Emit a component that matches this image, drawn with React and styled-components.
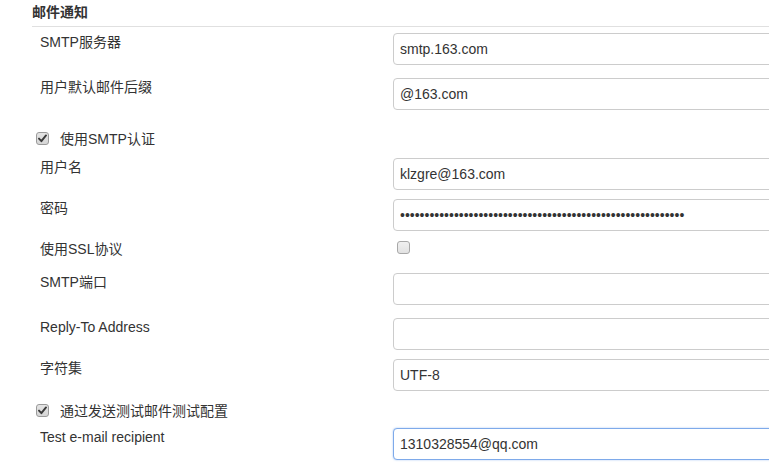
import React from 'react';
import styled, { createGlobalStyle } from 'styled-components';

const Global = createGlobalStyle`
  html, body { margin: 0; padding: 0; background: #fff; overflow: hidden; }
  body {
    font-family: "Liberation Sans", Arial, "Noto Sans CJK SC", sans-serif;
    font-size: 14px;
    color: #333;
  }
`;

const Page = styled.div`
  width: 769px;
  height: 473px;
  overflow: hidden;
  padding-left: 32px;
  box-sizing: border-box;
  display: flex;
  flex-direction: column;
`;

const SectionTitle = styled.h3`
  margin: 0;
  padding-top: 2px;
  font-size: 14px;
  line-height: 20px;
  font-weight: bold;
  color: #333;
`;

const Divider = styled.div`
  margin-top: 4px;
  height: 1px;
  background: #e0e0e0;
`;

const Row = styled.div`
  display: grid;
  grid-template-columns: 353px 420px;
  align-items: ${p => (p.$center ? 'center' : 'start')};
  min-height: ${p => (p.$center ? '20px' : 'auto')};
  margin-top: ${p => p.$gap}px;
  padding-left: 8px;
`;

const Label = styled.div`
  font-size: 14px;
  line-height: ${p => (p.$center ? 20 : 18)}px;
  color: #333;
  white-space: nowrap;
`;

const TextInput = styled.input`
  box-sizing: border-box;
  width: 100%;
  height: 32px;
  margin: 0;
  padding: 0 6px;
  font-family: "Liberation Sans", Arial, sans-serif;
  font-size: 14px;
  color: #333;
  background: #fff;
  border: 1px solid ${p => (p.$focused ? '#7eaaea' : '#cccccc')};
  border-radius: 4px;
  box-shadow: ${p => (p.$focused ? '0 0 2px rgba(102,155,233,0.6)' : 'none')};
  outline: none;
`;

const CheckRow = styled.div`
  display: flex;
  align-items: center;
  height: 20px;
  gap: 11px;
  padding-left: 4px;
  margin-top: ${p => p.$gap}px;
`;

const CheckText = styled.span`
  font-size: 14px;
  line-height: 20px;
  padding-top: 2px;
  color: #333;
`;

const Box = styled.span`
  box-sizing: border-box;
  display: inline-flex;
  align-items: center;
  justify-content: center;
  width: 13px;
  height: 13px;
  border: 1px solid ${p => (p.$checked ? '#9a9a9a' : '#a8a8a8')};
  border-radius: 3px;
  background: ${p => (p.$checked ? 'linear-gradient(#e4e4e4, #d6d6d6)' : 'linear-gradient(#f0f0f0, #e2e2e2)')};
  margin-left: ${p => p.$offset || 0}px;
`;

function Checkbox({ checked, offset }) {
  return (
    <Box $checked={checked} $offset={offset}>
      {checked && (
        <svg width="9" height="9" viewBox="0 0 9 9">
          <path d="M1 4.6 L3.4 7.2 L8 1.4" fill="none" stroke="#3a3a3a" strokeWidth="1.9" strokeLinecap="round" strokeLinejoin="round" />
        </svg>
      )}
    </Box>
  );
}

const FieldRow = ({ label, value, gap, type = 'text', focused }) => (
  <Row $gap={gap}>
    <Label>{label}</Label>
    <TextInput type={type} defaultValue={value} $focused={focused} readOnly />
  </Row>
);

export default function App() {
  const pwd = '•'.repeat(58);
  return (
    <>
      <Global />
      <Page>
        <SectionTitle>邮件通知</SectionTitle>
        <Divider />
        <FieldRow gap={6} label="SMTP服务器" value="smtp.163.com" />
        <FieldRow gap={13} label="用户默认邮件后缀" value="@163.com" />
        <CheckRow $gap={18}>
          <Checkbox checked />
          <CheckText>使用SMTP认证</CheckText>
        </CheckRow>
        <FieldRow gap={10} label="用户名" value="klzgre@163.com" />
        <FieldRow gap={9} label="密码" value={pwd} type="password" />
        <Row $gap={8} $center>
          <Label $center>使用SSL协议</Label>
          <div><Checkbox offset={4} /></div>
        </Row>
        <FieldRow gap={14} label="SMTP端口" value="" />
        <FieldRow gap={13} label="Reply-To Address" value="" />
        <FieldRow gap={9} label="字符集" value="UTF-8" />
        <CheckRow $gap={9}>
          <Checkbox checked />
          <CheckText>通过发送测试邮件测试配置</CheckText>
        </CheckRow>
        <FieldRow gap={8} label="Test e-mail recipient" value="1310328554@qq.com" focused />
      </Page>
    </>
  );
}
